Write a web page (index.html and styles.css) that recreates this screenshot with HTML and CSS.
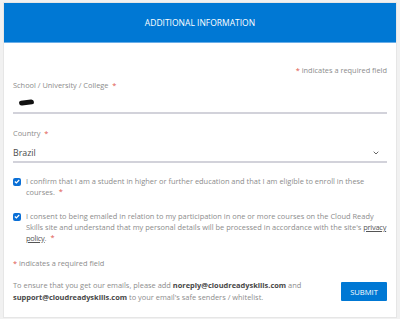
FILE: index.html
```html
<!DOCTYPE html>
<html lang="en">
<head>
    <meta charset="UTF-8">
    <meta name="viewport" content="width=device-width, initial-scale=1.0">
    <title>Additional Information</title>
    <link rel="stylesheet" href="styles.css">
</head>
<body>
    <div class="info-card">
        <div class="info-header">ADDITIONAL INFORMATION</div>
        <div class="info-body">
            <p class="required-note right"><span class="req">*</span> indicates a required field</p>

            <div class="field">
                <label for="school">School / University / College <span class="req">&nbsp;*</span></label>
                <div class="input-line">
                    <span class="redacted"></span>
                </div>
            </div>

            <div class="field country">
                <label for="country">Country <span class="req">&nbsp;*</span></label>
                <div class="input-line select-line">
                    <span class="select-value">Brazil</span>
                    <svg class="chevron" width="6" height="4" viewBox="0 0 6 4">
                        <path d="M0.7 0.7 L3 3 L5.3 0.7" fill="none" stroke="#666" stroke-width="1"/>
                    </svg>
                </div>
            </div>

            <div class="check-row first">
                <span class="checkbox">
                    <svg width="6" height="5" viewBox="0 0 6 5"><path d="M0.8 2.5 L2.4 4 L5.2 1" fill="none" stroke="#fff" stroke-width="1.2"/></svg>
                </span>
                <p>I confirm that I am a student in higher or further education and that I am eligible to enroll in these courses. <span class="req">&nbsp;*</span></p>
            </div>

            <div class="check-row">
                <span class="checkbox">
                    <svg width="6" height="5" viewBox="0 0 6 5"><path d="M0.8 2.5 L2.4 4 L5.2 1" fill="none" stroke="#fff" stroke-width="1.2"/></svg>
                </span>
                <p>I consent to being emailed in relation to my participation in one or more courses on the Cloud Ready Skills site and understand that my personal details will be processed in accordance with the site's <a href="#">privacy policy</a>. <span class="req">&nbsp;*</span></p>
            </div>

            <p class="required-note"><span class="req">*</span> indicates a required field</p>

            <div class="footer-row">
                <p>To ensure that you get our emails, please add <b>noreply@cloudreadyskills.com</b> and <b>support@cloudreadyskills.com</b> to your email's safe senders / whitelist.</p>
                <button>SUBMIT</button>
            </div>
        </div>
    </div>
</body>
</html>
```

FILE: styles.css
```css
* {
    margin: 0;
    padding: 0;
    box-sizing: border-box;
    font-family: "Open Sans", Arial, sans-serif;
}

body {
    background: #f1f1f1;
    padding: 2px 3px;
    width: 400px;
    height: 319px;
    overflow: hidden;
}

.info-card {
    background: white;
    border: 1px solid #e6e6e6;
}

.info-header {
    background: #0078d4;
    color: white;
    height: 40px;
    display: flex;
    justify-content: center;
    align-items: center;
    font-size: 8.5px;
    border-bottom: 1px solid #6aaee8;
}

.info-body {
    padding: 0 9px 14px;
    color: #8c8c8c;
    font-size: 7.45px;
}

.req {
    color: #e0554d;
}

.required-note {
    margin-top: 13px;
    line-height: 12px;
    font-size: 7.4px;
}

.required-note.right {
    text-align: right;
    margin-top: 21px;
}

.field {
    margin-top: 3px;
}

.field.country {
    margin-top: 13px;
}

.field label {
    display: block;
    line-height: 12px;
    font-size: 7.4px;
}

.input-line {
    height: 23px;
    padding-top: 2px;
    border-bottom: 2px solid #d2d2da;
    display: flex;
    align-items: center;
}

.redacted {
    display: inline-block;
    width: 15px;
    height: 5px;
    background: #111;
    border-radius: 3px 4px 3px 4px;
    margin-left: 6px;
    transform: rotate(-7deg);
}

.select-line {
    height: 24px;
    padding-top: 6px;
    justify-content: space-between;
    padding-right: 8px;
}

.select-value {
    color: #4a4a4a;
    font-size: 8.8px;
}

.check-row {
    display: flex;
    align-items: flex-start;
    gap: 5px;
    margin-top: 13px;
    line-height: 11px;
}

.checkbox {
    flex: none;
    width: 8px;
    height: 8px;
    margin-top: 1.5px;
    background: #0a6fd6;
    border-radius: 2px;
    display: flex;
    justify-content: center;
    align-items: center;
}

.check-row a {
    color: #555;
    letter-spacing: -0.25px;
}

.footer-row {
    display: flex;
    align-items: center;
    justify-content: space-between;
    margin-top: 11px;
    line-height: 11.6px;
}

.footer-row p {
    width: 305px;
}

.footer-row b {
    color: #474747;
}

button {
    flex: none;
    background: #0078d4;
    color: white;
    border: none;
    border-radius: 1px;
    font-size: 7.6px;
    height: 19px;
    width: 46px;
}
```
